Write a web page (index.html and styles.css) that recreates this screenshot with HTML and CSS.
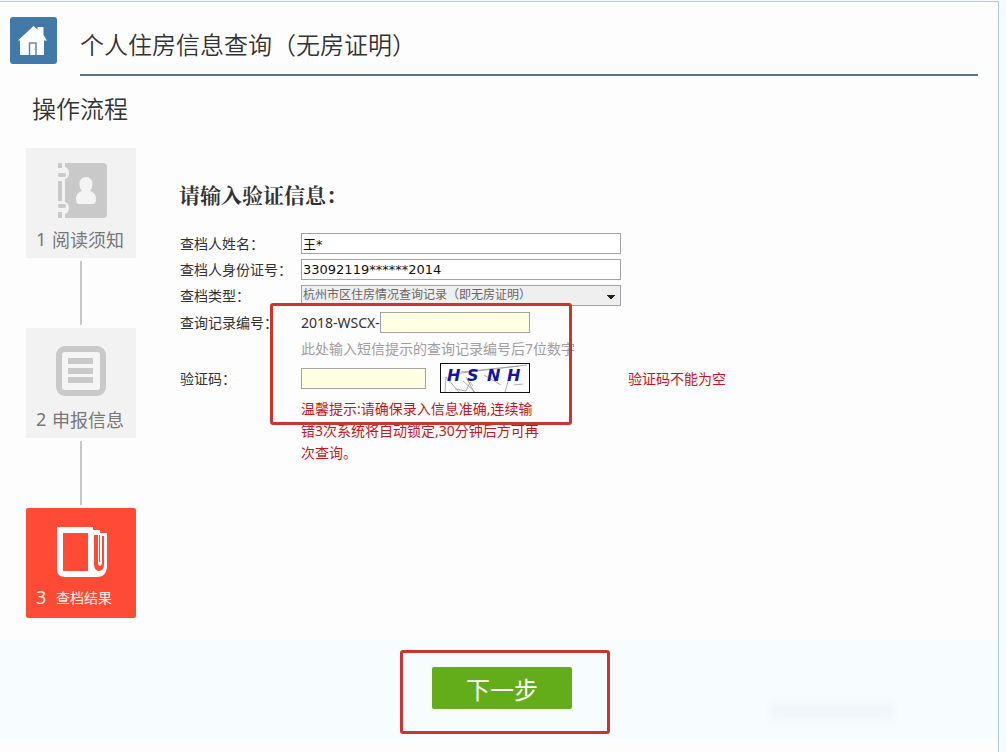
FILE: index.html
```
<!DOCTYPE html>
<html lang="zh-CN">
<head>
    <meta charset="UTF-8">
    <title>个人住房信息查询（无房证明）</title>
    <link rel="stylesheet" href="styles.css">
</head>
<body>
<div class="page">
    <header class="header">
        <a class="home" href="#" aria-label="首页">
            <svg viewBox="0 0 47 47" width="47" height="47">
                <path fill="#fafeff" d="M8 23.500L23.500 9l4 3.500V10h6v8l3.500 5.500h-3V38h-24V23.500z"/>
                <path fill="none" stroke="#77868e" stroke-width="1.500" d="M19.500 38V26h6.500v12"/>
                <path fill="#d5dfe5" d="M24 31h1v2h-1z"/>
            </svg>
        </a>
        <h1>个人住房信息查询（无房证明）</h1>
    </header>

    <main class="main">
        <aside class="flow">
            <h2>操作流程</h2>
            <div class="step">
                <svg viewBox="0 0 56 56" width="56" height="56">
                    <path fill="#c9c9c9" d="M9 0h38q4 0 4 4v47q0 4-4 4H9v-4q4-1 4-6t-4-6V16q4-1 4-6T9 4zM2 0h4v5H2zM2 18h4v20H2zM2 49h4v6H2z"/>
                    <path fill="#c9c9c9" d="M3 10h5q2 0 2 2t-2 2H3q-1 0-1-2t1-2zM3 41h5q2 0 2 2t-2 2H3q-1 0-1-2t1-2z"/>
                    <path fill="#f4f4f4" d="M30 14c4 0 6.500 3 6.500 7 0 3-1 5-2.500 7 4 1 6 4 6 8 0 3-1 5-3 5H23c-2 0-3-2-3-5 0-4 2-7 6-8-1.500-2-2.500-4-2.500-7 0-4 2.500-7 6.500-7z"/>
                </svg>
                <p><b>1</b>阅读须知</p>
            </div>
            <div class="line"></div>
            <div class="step">
                <svg viewBox="0 0 56 56" width="56" height="56">
                    <rect x="3" y="6" width="44" height="44" rx="6" fill="#f5f5f5" stroke="#c9c9c9" stroke-width="6"/>
                    <path fill="#c9c9c9" d="M12 15h25v6H12zM12 25h25v6H12zM12 34h25v6H12z"/>
                </svg>
                <p><b>2</b>申报信息</p>
            </div>
            <div class="line"></div>
            <div class="step active">
                <svg viewBox="0 0 56 56" width="56" height="56">
                    <path fill="#fff" fill-rule="evenodd" d="M1 6h36v3h7v3h7v32q0 12-10 12H9q-8 0-8-8zM7 12v38h25V12zM38 14v29q0 7 5 7t5-7V15h-2v26q0 4-2 4t-2-4V14z"/>
                    <path fill="none" stroke="#ff4a35" d="M43.500 14v27"/>
                </svg>
                <p><b>3</b><small>查档结果</small></p>
            </div>
        </aside>

        <form class="verify" onsubmit="return false">
            <h3>请输入验证信息：</h3>
            <div class="row">
                <label for="name">查档人姓名：</label>
                <input id="name" class="wide" type="text" value="王*">
            </div>
            <div class="row">
                <label for="idcard">查档人身份证号：</label>
                <input id="idcard" class="wide" type="text" value="33092119******2014">
            </div>
            <div class="row">
                <label for="type">查档类型：</label>
                <select id="type" class="wide">
                    <option>杭州市区住房情况查询记录（即无房证明）</option>
                </select>
            </div>
            <div class="row record-row">
                <label for="record">查询记录编号：</label>
                <div class="record"><span>2018-WSCX-</span><input id="record" type="text"></div>
            </div>
            <p class="hint">此处输入短信提示的查询记录编号后7位数字</p>
            <div class="row code-row">
                <label for="code">验证码：</label>
                <div class="code">
                    <input id="code" type="text">
                    <svg class="captcha" viewBox="0 0 88 28" width="90" height="30">
                        <path fill="none" stroke="#999" stroke-width="0.800" d="M4 28l1-15 13 15M12 10l74-9M20 8l58-6M14 25l11 2 4-9 3 4M22 17l12 11M25 13l8 15M43 11l17 10M64 28l5-17M73 21l9-1"/>
                        <text x="6" y="17">H</text>
                        <text x="26" y="17">S</text>
                        <text x="46" y="17">N</text>
                        <text x="66" y="17">H</text>
                    </svg>
                </div>
                <span class="error">验证码不能为空</span>
            </div>
            <p class="tips">温馨提示:请确保录入信息准确,连续输错3次系统将自动锁定,30分钟后方可再次查询。</p>
            <div class="mark"></div>
        </form>
    </main>

    <footer class="footer">
        <div class="next-box"><button type="button">下一步</button></div>
        <div class="smudge"></div>
    </footer>
</div>
</body>
</html>
```
FILE: styles.css
```
* {
    box-sizing: border-box;
}
body {
    margin: 0;
    background: #f6fbfe;
    font-family: "Noto Sans", "Noto Sans CJK SC", sans-serif;
    font-size: 14px;
    color: #333;
}
h1, h2, h3, p {
    margin: 0;
}
.page {
    min-height: calc(100vh - 1px);
    margin: 1px 7px 0 0;
    border-top: 1px solid #a9d0dc;
    border-right: 1px solid #b9c8d0;
    background: #fdfdfd;
}
.header {
    display: flex;
    gap: 23px;
    padding: 15px 20px 0 10px;
}
.home {
    width: 47px;
    height: 47px;
    border-radius: 3px;
    background: #4179a9;
}
.header h1 {
    flex: 1;
    height: 59px;
    border-bottom: 2px solid #587382;
    font-size: 24px;
    font-weight: 350;
    line-height: 54px;
    font-family: "Noto Sans CJK SC", sans-serif;
}
.main {
    display: flex;
    align-items: flex-start;
    gap: 43px;
    padding: 12px 20px 22px 26px;
}
.flow {
    width: 110px;
}
.flow h2 {
    height: 60px;
    padding-left: 6px;
    font-size: 24px;
    font-weight: 350;
    line-height: 40px;
    font-family: "Noto Sans CJK SC", sans-serif;
}
.step {
    height: 110px;
    padding: 15px 0 0 10px;
    background: #f2f2f2;
    color: #777;
}
.step svg {
    display: block;
    margin-left: 20px;
}
.step p {
    display: flex;
    align-items: center;
    height: 40px;
    font-size: 18px;
}
.step b {
    width: 16px;
    font-weight: 400;
}
.line {
    width: 2px;
    height: 64px;
    margin: 3px auto;
    background: #c8c8c8;
}
.step.active {
    padding-top: 13px;
    border-radius: 2px;
    background: #ff4a35;
    color: #fff3e8;
}
.step.active b {
    width: 20px;
}
.step small {
    font-size: 14px;
}
.verify {
    position: relative;
    flex: 1;
    padding-top: 91px;
}
.verify h3 {
    height: 51px;
    font-family: SimSun, "Noto Serif CJK SC", "Noto Sans CJK SC", serif;
    font-size: 21px;
    line-height: 30px;
}
.row {
    display: flex;
    align-items: center;
    height: 26px;
}
.row label {
    width: 122px;
    padding-left: 1px;
}
.verify input,
.verify select {
    height: 21px;
    margin: 0;
    padding: 0 1px;
    border: 1px solid #a2a2a8;
    border-radius: 0;
    font-family: "DejaVu Sans", "Noto Sans CJK SC", sans-serif;
    font-size: 13px;
    color: #111;
    background: #fff;
}
.verify .wide {
    width: 320px;
}
.verify select {
    appearance: none;
    color: #666;
    font-size: 12px;
    background: conic-gradient(from -45deg at 50% 100%, #222 90deg, transparent 0) 305px 9px / 8px 4px no-repeat, #efeff0;
}
.record-row {
    height: 28px;
}
.record {
    display: flex;
    align-items: center;
}
.verify #record,
.verify #code {
    background: #ffffe3;
}
.verify #record {
    width: 150px;
}
.hint {
    padding-left: 122px;
    line-height: 26px;
    color: #a39ca0;
}
.code-row {
    height: 32px;
}
.code {
    display: flex;
    align-items: center;
    gap: 14px;
    width: 327px;
}
.verify #code {
    width: 125px;
}
.captcha {
    border: 1px solid #111;
    background: #fff;
}
.captcha text {
    fill: #1414a0;
    font: italic bold 16px "DejaVu Sans", sans-serif;
}
.error,
.tips {
    color: #c4161c;
}
.tips {
    width: 362px;
    padding: 4px 0 0 122px;
    line-height: 22px;
}
/* 红色标注框 */
.mark {
    position: absolute;
    top: 215px;
    left: 91px;
    width: 302px;
    height: 122px;
    border: 3px solid #c8362f;
    border-radius: 3px;
}
.footer {
    position: relative;
    display: flex;
    justify-content: center;
    padding: 10px 0 4px 12px;
    background: #f7fdfe;
}
.next-box {
    padding: 14px 35px 22px 29px;
    border: 3px solid #c8362f;
    border-radius: 3px;
}
.next-box button {
    display: block;
    width: 140px;
    height: 42px;
    padding: 0;
    border: 0;
    border-radius: 2px;
    background: #63ad1b;
    color: #fff;
    font-family: "Noto Sans CJK SC", sans-serif;
    font-size: 24px;
    cursor: pointer;
}
.smudge {
    position: absolute;
    right: 104px;
    bottom: 18px;
    width: 124px;
    height: 18px;
    background: #f1f6fb;
    filter: blur(3px);
}
```
